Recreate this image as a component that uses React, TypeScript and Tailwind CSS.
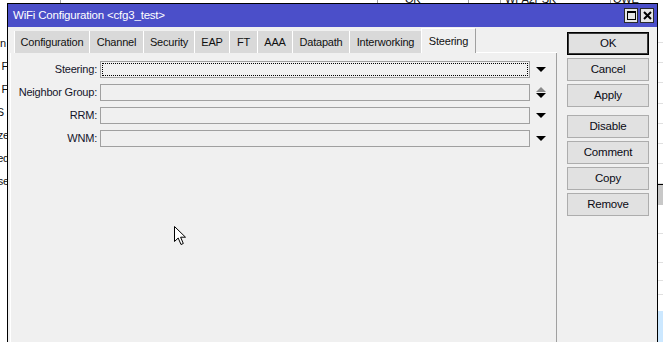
import React from 'react';

const tabs = [
  { label: 'Configuration', w: 'w-[75px]' },
  { label: 'Channel', w: 'w-[54px]' },
  { label: 'Security', w: 'w-[51px]' },
  { label: 'EAP', w: 'w-[35px]' },
  { label: 'FT', w: 'w-[28px]' },
  { label: 'AAA', w: 'w-[35px]' },
  { label: 'Datapath', w: 'w-[57px]' },
  { label: 'Interworking', w: 'w-[72px]' },
];

const fields = [
  { label: 'Steering:', focused: true, spin: false },
  { label: 'Neighbor Group:', focused: false, spin: true },
  { label: 'RRM:', focused: false, spin: false },
  { label: 'WNM:', focused: false, spin: false },
];

function DownArrow({ color = '#000' }: { color?: string }) {
  return (
    <svg width="10" height="5" viewBox="0 0 10 5">
      <polygon points="0,0 10,0 5,5" fill={color} />
    </svg>
  );
}

function UpArrow({ color = '#000' }: { color?: string }) {
  return (
    <svg width="10" height="5" viewBox="0 0 10 5">
      <polygon points="0,5 10,5 5,0" fill={color} />
    </svg>
  );
}

function Btn({ label, primary = false, className = '' }: { label: string; primary?: boolean; className?: string }) {
  return (
    <div
      className={`h-[23px] flex items-center justify-center bg-[#e1e1e1] text-[11.5px] text-[#0a0a14] ${
        primary ? 'border border-black shadow-[inset_0_0_0_1px_#3a3a3a]' : 'border border-[#adadad]'
      } ${className}`}
    >
      {label}
    </div>
  );
}

export default function App() {
  return (
    <div className="relative w-[663px] h-[342px] overflow-hidden bg-white font-['Liberation_Sans',Arial,sans-serif] tracking-[-0.2px] text-[11px]">
      {/* underlying window, left fragments (clipped by the dialog) */}
      <div className="absolute left-0 top-[36px] w-[7px] flex flex-col text-[#111] leading-[14px]">
        <div className="h-[23px] flex justify-end pr-[1px]">n</div>
        <div className="h-[23px] flex justify-end -mr-[1px]">F</div>
        <div className="h-[23px] flex justify-end -mr-[1px]">F</div>
        <div className="h-[23px] flex justify-end pr-[3px]">S</div>
        <div className="h-[23px] flex justify-end -mr-[2px]">ze</div>
        <div className="h-[23px] flex justify-end -mr-[2px]">ed</div>
        <div className="h-[23px] flex justify-end -mr-[2px]">se</div>
      </div>

      {/* underlying window, top strip */}
      <div className="absolute left-[60px] top-0 w-px h-[3px] bg-[#a0a0a0]" />
      <div className="absolute left-[377px] top-0 w-px h-[3px] bg-[#a0a0a0]" />
      <div className="absolute left-[468px] top-0 w-px h-[3px] bg-[#a0a0a0]" />
      <div className="absolute left-[500px] top-0 w-px h-[3px] bg-[#a0a0a0]" />
      <div className="absolute left-[610px] top-0 w-px h-[3px] bg-[#a0a0a0]" />
      <div className="absolute left-[405px] -top-[9px] text-[#111]">OK</div>
      <div className="absolute left-[505px] -top-[9px] text-[#111]">WPA2PSK</div>
      <div className="absolute left-[613px] -top-[9px] text-[#111]">OWE</div>

      {/* underlying window, right strip */}
      <div className="absolute left-[658px] top-0 w-[5px] h-full flex flex-col">
        <div className="h-[43px] border-b border-[#e0e0e0]" />
        <div className="h-[20px] border-b border-[#e0e0e0]" />
        <div className="h-[20px] border-b border-[#e0e0e0]" />
        <div className="h-[21px] border-b border-[#e0e0e0]" />
        <div className="h-[20px] border-b border-[#e0e0e0]" />
        <div className="h-[20px] border-b border-[#e0e0e0]" />
        <div className="h-[20px] border-b border-[#e0e0e0]" />
        <div className="h-[20px] border-b border-[#e0e0e0]" />
        <div className="h-[21px] border-t border-black bg-[#c8c8c8]" />
        <div className="h-[29px] border-b border-[#e0e0e0]" />
        <div className="h-[29px] border-b border-[#e0e0e0]" />
        <div className="h-[18px] border-b border-[#e0e0e0]" />
        <div className="h-[14px] border-b border-[#e0e0e0]" />
        <div className="h-[16px]" />
        <div className="flex-1 bg-[#cce8ff]" />
      </div>

      {/* dialog window */}
      <div className="absolute left-[7px] top-[3px] w-[651px] h-[420px] border border-black bg-[#f0f0f0] flex flex-col">
        <div className="h-[23px] shrink-0 bg-[#4b4fc9] flex items-center pl-[5px] pr-[3px] text-white text-[11.5px]">
          <span className="flex-1">WiFi Configuration &lt;cfg3_test&gt;</span>
          <div className="flex gap-[2px]">
            <div className="w-[14px] h-[15px] bg-[#e6e6e6] border border-[#2a2a2a] flex items-center justify-center">
              <div className="w-[9px] h-[9px] border border-black border-t-2" />
            </div>
            <div className="w-[14px] h-[15px] bg-[#e6e6e6] border border-[#2a2a2a] flex items-center justify-center">
              <svg width="9" height="9" viewBox="0 0 9 9">
                <path d="M1 1 L8 8 M8 1 L1 8" stroke="#000" strokeWidth="2" />
              </svg>
            </div>
          </div>
        </div>

        <div className="flex flex-1">
          <div className="ml-[2px] w-[547px] flex flex-col">
            <div className="h-[26px] flex items-end pl-[4px]">
              {tabs.map((t) => (
                <div
                  key={t.label}
                  className={`${t.w} h-[22px] flex items-center justify-center bg-[#d9d9d9] border-l border-white text-[#111]`}
                >
                  {t.label}
                </div>
              ))}
              <div className="w-[55px] h-[25px] flex items-start pt-[4px] justify-center bg-[#f0f0f0] border-l border-t border-white border-r border-r-[#a0a0a0] text-[#111]">
                Steering
              </div>
              <div className="flex-1 self-end h-px bg-white" />
            </div>

            <div className="flex-1 border-l border-white border-r border-r-[#a0a0a0] pt-[8px] flex flex-col gap-[6px]">
              {fields.map((f) => (
                <div key={f.label} className="h-[17px] flex items-center">
                  <div className="w-[87px] text-right text-[#14142a] pr-[1px]">{f.label}</div>
                  <div
                    className={`ml-[2px] w-[430px] h-[17px] border border-[#a0a0a0] bg-[#f0f0f0] ${
                      f.focused ? 'outline-1 outline-dotted outline-black outline-offset-[-3px]' : ''
                    }`}
                  />
                  <div className="w-[22px] flex flex-col items-center justify-center gap-[1px]">
                    {f.spin ? (
                      <>
                        <UpArrow color="#8a8a8a" />
                        <DownArrow />
                      </>
                    ) : (
                      <DownArrow />
                    )}
                  </div>
                </div>
              ))}
            </div>
          </div>

          <div className="ml-[10px] w-[82px] pt-[5px] flex flex-col gap-[3px]">
            <Btn label="OK" primary />
            <Btn label="Cancel" />
            <Btn label="Apply" />
            <Btn label="Disable" className="mt-[5px]" />
            <Btn label="Comment" />
            <Btn label="Copy" />
            <Btn label="Remove" />
          </div>
        </div>
      </div>

      {/* mouse pointer */}
      <svg className="absolute left-[174px] top-[226px]" width="14" height="21" viewBox="0 0 14 21">
        <path
          d="M0.5 0.5 L0.5 15.5 L4.2 12 L7 18.5 L9.3 17.5 L6.6 11.2 L11.5 11.2 Z"
          fill="#fff"
          stroke="#000"
          strokeWidth="1"
          strokeLinejoin="miter"
        />
      </svg>
    </div>
  );
}
